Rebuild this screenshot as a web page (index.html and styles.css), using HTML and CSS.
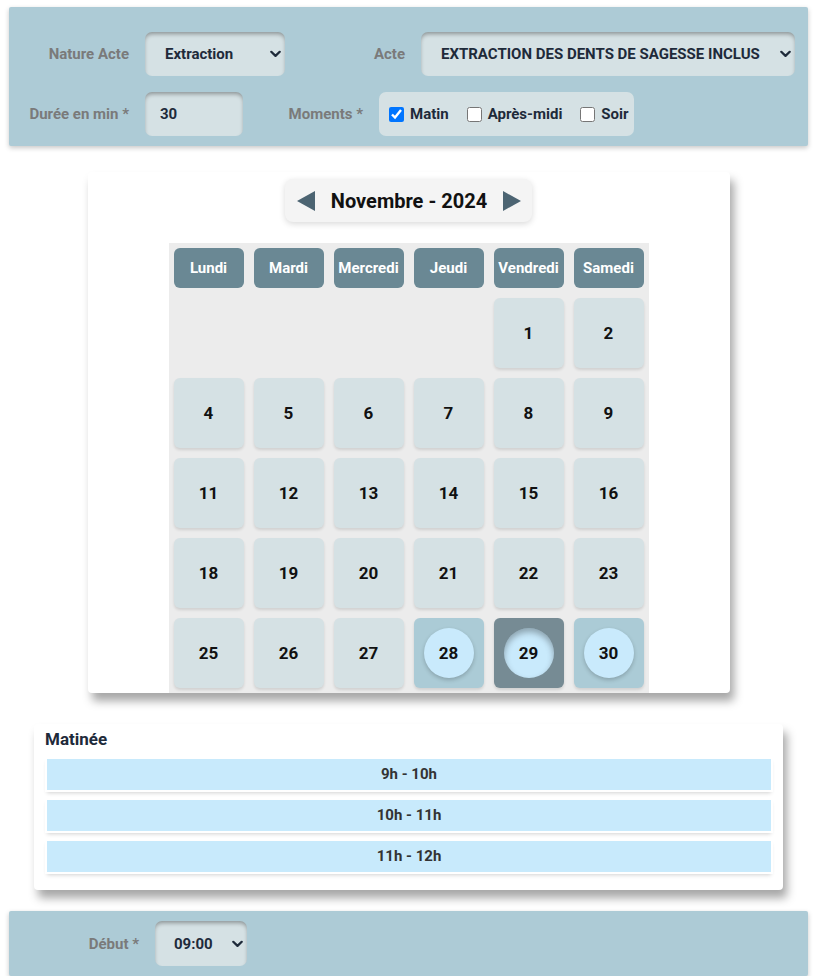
FILE: index.html
```html
<!DOCTYPE html>
<html lang="fr">
<head>
<meta charset="utf-8">
<title>Rendez-vous</title>
<link rel="stylesheet" href="styles.css">
</head>
<body>
<div class="page">
  <section class="panel panel-top">
    <div class="row">
      <label class="lbl">Nature Acte</label>
      <div class="field w-nature">
        <select class="sel"><option>Extraction</option></select>
        <svg class="chev" viewBox="0 0 11 7" width="11" height="7"><path d="M1.3 1.3 L5.5 5.4 L9.7 1.3" fill="none" stroke="#1e2a3a" stroke-width="2.3" stroke-linecap="round" stroke-linejoin="round"/></svg>
      </div>
      <label class="lbl lbl2">Acte</label>
      <div class="field w-acte">
        <select class="sel sel-acte"><option>EXTRACTION DES DENTS DE SAGESSE INCLUSES</option></select>
        <svg class="chev" viewBox="0 0 11 7" width="11" height="7"><path d="M1.3 1.3 L5.5 5.4 L9.7 1.3" fill="none" stroke="#1e2a3a" stroke-width="2.3" stroke-linecap="round" stroke-linejoin="round"/></svg>
      </div>
    </div>
    <div class="row">
      <label class="lbl">Durée en min *</label>
      <div class="field w-duree">
        <input class="inp" type="text" value="30">
      </div>
      <label class="lbl lbl2">Moments *</label>
      <div class="checks">
        <label class="chk"><input type="checkbox" checked><span>Matin</span></label>
        <label class="chk"><input type="checkbox"><span>Après-midi</span></label>
        <label class="chk"><input type="checkbox"><span>Soir</span></label>
      </div>
    </div>
  </section>

  <section class="cal">
    <div class="pill">
      <svg class="tri" viewBox="0 0 18 20" width="18" height="20"><path d="M0 10 L18 0 L18 20 Z" fill="#4c6472"/></svg>
      <span class="month">Novembre - 2024</span>
      <svg class="tri" viewBox="0 0 18 20" width="18" height="20"><path d="M18 10 L0 0 L0 20 Z" fill="#4c6472"/></svg>
    </div>
    <div class="grid">
      <div class="wd">Lundi</div>
      <div class="wd">Mardi</div>
      <div class="wd">Mercredi</div>
      <div class="wd">Jeudi</div>
      <div class="wd">Vendredi</div>
      <div class="wd">Samedi</div>

      <div class="empty"></div>
      <div class="empty"></div>
      <div class="empty"></div>
      <div class="empty"></div>
      <div class="day">1</div>
      <div class="day">2</div>

      <div class="day">4</div>
      <div class="day">5</div>
      <div class="day">6</div>
      <div class="day">7</div>
      <div class="day">8</div>
      <div class="day">9</div>

      <div class="day">11</div>
      <div class="day">12</div>
      <div class="day">13</div>
      <div class="day">14</div>
      <div class="day">15</div>
      <div class="day">16</div>

      <div class="day">18</div>
      <div class="day">19</div>
      <div class="day">20</div>
      <div class="day">21</div>
      <div class="day">22</div>
      <div class="day">23</div>

      <div class="day">25</div>
      <div class="day">26</div>
      <div class="day">27</div>
      <div class="day avail"><span class="circ">28</span></div>
      <div class="day picked"><span class="circ">29</span></div>
      <div class="day avail"><span class="circ">30</span></div>
    </div>
  </section>

  <section class="slots">
    <h3 class="slots-title">Matinée</h3>
    <div class="slot">9h - 10h</div>
    <div class="slot">10h - 11h</div>
    <div class="slot">11h - 12h</div>
  </section>

  <section class="panel panel-bottom">
    <div class="row">
      <label class="lbl">Début *</label>
      <div class="field w-debut">
        <select class="sel sel-debut"><option>09:00</option></select>
        <svg class="chev" viewBox="0 0 11 7" width="11" height="7"><path d="M1.3 1.3 L5.5 5.4 L9.7 1.3" fill="none" stroke="#1e2a3a" stroke-width="2.3" stroke-linecap="round" stroke-linejoin="round"/></svg>
      </div>
    </div>
  </section>
</div>
</body>
</html>
```

FILE: styles.css
```css
* { box-sizing: border-box; }

body {
  margin: 0;
  background: #ffffff;
  font-family: Roboto, "Liberation Sans", sans-serif;
  color: #1e2a3a;
}

.page {
  width: 799px;
  margin-left: 9px;
  padding-top: 7px;
}

.panel {
  background: #adcbd6;
  border-radius: 2px;
  box-shadow: 0 2px 5px rgba(0, 0, 0, 0.22);
}

.panel-top {
  padding: 25px 13px 10px 15px;
  display: flex;
  flex-direction: column;
  gap: 16px;
}

.row {
  display: flex;
  align-items: center;
  gap: 16px;
}

.lbl {
  flex: none;
  width: 105px;
  text-align: right;
  font-weight: 700;
  font-size: 15px;
  color: #7a7a7a;
  white-space: nowrap;
}

.lbl2 { width: 104px; }

.field {
  position: relative;
  flex: none;
  height: 44px;
  background: #d5e1e4;
  border-radius: 7px;
  box-shadow: inset 0 3px 4px -1px rgba(0, 0, 0, 0.35);
}

.w-nature { width: 140px; }
.w-acte { width: 374px; }
.w-duree { width: 98px; }
.w-debut { width: 92px; height: 45px; }

.sel {
  appearance: none;
  -webkit-appearance: none;
  border: 0;
  outline: 0;
  background: transparent;
  width: 100%;
  height: 100%;
  padding: 0 22px 0 20px;
  font-family: Roboto, "Liberation Sans", sans-serif;
  font-weight: 700;
  font-size: 15px;
  color: #1e2a3a;
}

.sel-acte { padding-right: 35px; }
.sel-debut { padding-left: 19px; }

.chev {
  position: absolute;
  right: 4px;
  top: 50%;
  transform: translateY(-50%);
  pointer-events: none;
}

.inp {
  border: 0;
  outline: 0;
  background: transparent;
  width: 100%;
  height: 100%;
  padding: 0 10px 0 15px;
  font-family: Roboto, "Liberation Sans", sans-serif;
  font-weight: 700;
  font-size: 15px;
  color: #1e2a3a;
}

.checks {
  display: flex;
  align-items: center;
  height: 44px;
  padding: 0 5px 0 10px;
  background: #d5e1e4;
  border-radius: 7px;
  gap: 18px;
}

.chk {
  display: flex;
  align-items: center;
  gap: 6px;
  font-weight: 700;
  font-size: 15px;
  color: #1e2a3a;
}

.chk input {
  margin: 0;
  width: 15px;
  height: 15px;
}

/* Calendar */
.cal {
  width: 642px;
  margin: 26px auto 0;
  padding-top: 7px;
  background: #ffffff;
  border-radius: 4px;
  box-shadow: 4px 8px 10px rgba(0, 0, 0, 0.35);
  display: flex;
  flex-direction: column;
  align-items: center;
}

.pill {
  height: 43px;
  display: flex;
  align-items: center;
  gap: 16px;
  padding: 0 11px 0 12px;
  margin-bottom: 21px;
  background: #f4f4f4;
  border-radius: 8px;
  box-shadow: 0 2px 6px rgba(0, 0, 0, 0.15);
}

.month {
  font-weight: 700;
  font-size: 20px;
  color: #111111;
}

.grid {
  display: grid;
  grid-template-columns: repeat(6, 80px);
  background: #ececec;
}

.wd {
  margin: 5px;
  height: 40px;
  border-radius: 6px;
  background: #6a8894;
  color: #ffffff;
  font-weight: 700;
  font-size: 15px;
  display: flex;
  align-items: center;
  justify-content: center;
}

.empty {
  margin: 5px;
  height: 70px;
}

.day {
  margin: 5px;
  height: 70px;
  border-radius: 6px;
  background: #d5e1e4;
  box-shadow: 0 2px 3px rgba(0, 0, 0, 0.12);
  display: flex;
  align-items: center;
  justify-content: center;
  font-weight: 700;
  font-size: 17px;
  color: #111111;
}

.day.avail { background: #abcbd6; }
.day.picked { background: #768b94; }

.circ {
  width: 50px;
  height: 50px;
  border-radius: 50%;
  background: #c9eafc;
  box-shadow: 0 2px 4px rgba(0, 0, 0, 0.2);
  display: flex;
  align-items: center;
  justify-content: center;
}

.picked .circ {
  box-shadow: inset 0 4px 6px rgba(0, 0, 0, 0.3);
}

/* Slots */
.slots {
  margin: 31px 25px 0;
  padding: 5px 12px 18px 11px;
  background: #ffffff;
  border-radius: 4px;
  box-shadow: 4px 8px 10px rgba(0, 0, 0, 0.35);
}

.slots-title {
  margin: 0 0 10px;
  height: 20px;
  line-height: 20px;
  font-weight: 700;
  font-size: 17px;
  color: #1e2a3a;
}

.slot {
  margin: 0 0 10px 2px;
  height: 31px;
  line-height: 31px;
  text-align: center;
  background: #c8eafc;
  box-shadow: 0 0 0 2px #ffffff, 0 3px 4px rgba(0, 0, 0, 0.18);
  font-weight: 700;
  font-size: 15px;
  color: #333333;
}

.slot:last-child { margin-bottom: 0; }

.panel-bottom {
  margin-top: 21px;
  padding: 10px 0 10px 25px;
}
```
